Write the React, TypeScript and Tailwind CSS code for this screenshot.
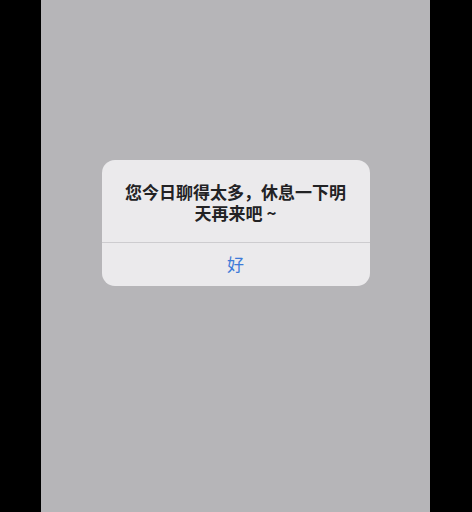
export default function App() {
  return (
    <div
      className="flex h-[512px] w-[472px] bg-black"
      style={{ fontFamily: '"Noto Sans CJK SC", "Noto Sans", sans-serif' }}
    >
      <div className="ml-[41px] flex w-[389px] justify-center bg-[#b6b5b8] pt-[160px]">
        <div className="flex h-[126px] w-[268px] flex-col rounded-[13px] bg-[#ebeaec]">
          <div className="flex h-[82px] items-center justify-center px-[16px] pt-[1px]">
            <p className="text-center text-[17px] font-bold leading-[21px] text-[#222224]">
              您今日聊得太多，休息一下明天再来吧 ~
            </p>
          </div>
          <div className="h-px bg-[#cdcccf]" />
          <button className="flex flex-1 items-center justify-center pb-[2px] text-[17px] text-[#3d7bd8]">
            好
          </button>
        </div>
      </div>
    </div>
  );
}
